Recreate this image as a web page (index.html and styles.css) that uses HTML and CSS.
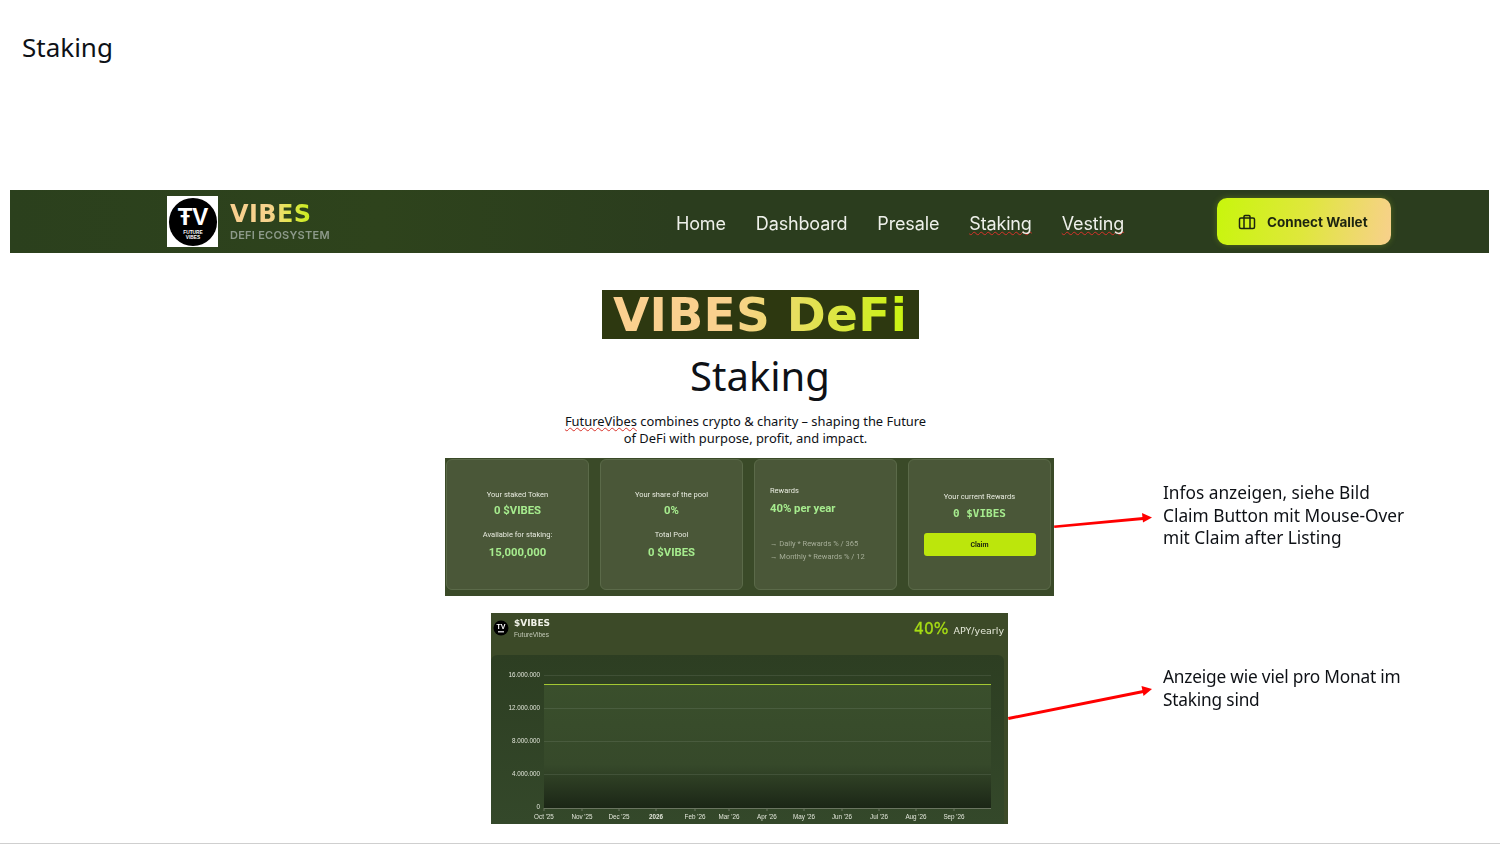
FILE: index.html
```html
<!DOCTYPE html>
<html lang="de">
<head>
  <meta charset="UTF-8">
  <title>Staking</title>
  <link rel="stylesheet" href="styles.css">
</head>
<body>
  <div class="slide">
    <div class="slide-title">Staking</div>

    <div class="navbar">
      <div class="brand">
        <div class="logo-box">
          <svg width="52" height="52" viewBox="0 0 52 52">
            <circle cx="26" cy="26" r="25" fill="#000"/>
            <text x="26" y="29" text-anchor="middle" class="logo-big">ŦV</text>
            <text x="26" y="38" text-anchor="middle" class="logo-small">FUTURE</text>
            <text x="26" y="44" text-anchor="middle" class="logo-small">VIBES</text>
          </svg>
        </div>
        <div class="brand-text">
          <div class="brand-name">VIBES</div>
          <div class="brand-sub">DEFI ECOSYSTEM</div>
        </div>
      </div>
      <div class="nav-links">
        <span>Home</span>
        <span>Dashboard</span>
        <span>Presale</span>
        <span class="spell">Staking</span>
        <span class="spell">Vesting</span>
      </div>
      <div class="wallet-btn">
        <svg width="18" height="18" viewBox="0 0 18 18" fill="none" stroke="#1c2410" stroke-width="1.5">
          <rect x="1.5" y="5" width="15" height="10.5" rx="1.5"/>
          <path d="M6 15.500V3.500a1 1 0 0 1 1-1h4a1 1 0 0 1 1 1v12"/>
        </svg>
        <span>Connect Wallet</span>
      </div>
    </div>

    <div class="hero">
      <div class="hero-banner"><span>VIBES DeFi</span></div>
      <div class="hero-title">Staking</div>
      <div class="hero-text"><span class="spell">FutureVibes</span> combines crypto &amp; charity – shaping the Future<br>of DeFi with purpose, profit, and impact.</div>
    </div>

    <div class="stats">
      <div class="card">
        <div class="label">Your staked Token</div>
        <div class="value">0 $VIBES</div>
        <div class="label gap">Available for staking:</div>
        <div class="value wide">15,000,000</div>
      </div>
      <div class="card">
        <div class="label">Your share of the pool</div>
        <div class="value">0%</div>
        <div class="label gap">Total Pool</div>
        <div class="value wide">0 $VIBES</div>
      </div>
      <div class="card card-left">
        <div class="label">Rewards</div>
        <div class="value wide">40% per year</div>
        <div class="formula first">→ Daily * Rewards % / 365</div>
        <div class="formula">→ Monthly * Rewards % / 12</div>
      </div>
      <div class="card">
        <div class="label">Your current Rewards</div>
        <div class="value mono">0 $VIBES</div>
        <div class="claim">Claim</div>
      </div>
    </div>

    <div class="chart">
      <div class="chart-head">
        <div class="token">
          <svg width="16" height="16" viewBox="0 0 16 16">
            <circle cx="8" cy="8" r="7.500" fill="#000"/>
            <text x="8" y="9" text-anchor="middle" class="token-mark">TV</text>
            <rect x="5" y="11" width="6" height="1.500" fill="#bbb"/>
          </svg>
          <div>
            <div class="token-name">$VIBES</div>
            <div class="token-sub">FutureVibes</div>
          </div>
        </div>
        <div class="apy"><b>40%</b> APY/yearly</div>
      </div>
      <div class="chart-panel">
        <svg width="513" height="169" viewBox="0 0 513 169">
          <defs>
            <linearGradient id="area" x1="0" y1="0" x2="0" y2="1">
              <stop offset="0" stop-color="#3a4f2c"/>
              <stop offset="0.65" stop-color="#36492a"/>
              <stop offset="1" stop-color="#1b2616"/>
            </linearGradient>
          </defs>
          <rect x="53" y="29" width="447" height="124" fill="url(#area)"/>
          <path d="M53 20.500H500M53 53.500H500M53 86.500H500M53 119.500H500" stroke="#fff" stroke-opacity="0.09"/>
          <path d="M53 29.500H500" stroke="#a4c832"/>
          <path d="M53 153.500H500" stroke="#6a7560"/>
          <path d="M53 153V156M91 153V156M128 153V156M165 153V156M204 153V156M238 153V156M276 153V156M313 153V156M351 153V156M388 153V156M425 153V156M463 153V156" stroke="#6a7560"/>
          <g class="axis-y" text-anchor="end">
            <text x="49" y="22">16.000.000</text>
            <text x="49" y="55">12.000.000</text>
            <text x="49" y="88">8.000.000</text>
            <text x="49" y="121">4.000.000</text>
            <text x="49" y="154">0</text>
          </g>
          <g class="axis-x" text-anchor="middle">
            <text x="53" y="164">Oct '25</text>
            <text x="91" y="164">Nov '25</text>
            <text x="128" y="164">Dec '25</text>
            <text x="165" y="164" font-weight="700">2026</text>
            <text x="204" y="164">Feb '26</text>
            <text x="238" y="164">Mar '26</text>
            <text x="276" y="164">Apr '26</text>
            <text x="313" y="164">May '26</text>
            <text x="351" y="164">Jun '26</text>
            <text x="388" y="164">Jul '26</text>
            <text x="425" y="164">Aug '26</text>
            <text x="463" y="164">Sep '26</text>
          </g>
        </svg>
      </div>
    </div>

    <svg class="arrows" width="1500" height="846" viewBox="0 0 1500 846">
      <g fill="#ff0000" stroke="none">
        <polygon points="1054,525.500 1143,517 1143.300,520 1054.300,528"/>
        <polygon points="1152,517.500 1142,513 1143,522.500"/>
        <polygon points="1008,717 1143,690 1143.600,693 1008.600,720"/>
        <polygon points="1152,689 1141.500,686 1143.500,696"/>
      </g>
    </svg>

    <div class="note note-one">Infos anzeigen, siehe Bild<br>Claim Button mit Mouse-Over<br>mit Claim after Listing</div>
    <div class="note note-two">Anzeige wie viel pro Monat im<br>Staking sind</div>

    <div class="slide-end"></div>
  </div>
</body>
</html>
```

FILE: styles.css
```css
html, body {
  margin: 0;
  padding: 0;
  background: #fff;
  overflow: hidden;
}

.slide {
  position: relative;
  width: 1500px;
  height: 846px;
  font-family: "Noto Sans", sans-serif;
  color: #0e1116;
  overflow: hidden;
}

.slide-title {
  position: absolute;
  left: 22px;
  top: 29px;
  font-size: 26px;
  line-height: 36px;
}

.spell {
  text-decoration: underline wavy #d8322a 1px;
  text-decoration-skip-ink: none;
  text-underline-offset: 1px;
}

/* navbar picture */
.navbar {
  position: absolute;
  left: 10px;
  top: 190px;
  width: 1479px;
  height: 63px;
  background: linear-gradient(90deg, #2b401d 0%, #2e431c 25%, #2b3d1e 45%, #2b3d1e 100%);
  display: flex;
  align-items: center;
  font-family: Inter, sans-serif;
  filter: blur(0.3px);
}

.brand {
  display: flex;
  align-items: center;
  gap: 12px;
  margin-left: 157px;
  width: 509px;
}

.logo-box {
  width: 51px;
  height: 51px;
  background: #fff;
  display: flex;
  align-items: center;
  justify-content: center;
}

.logo-box svg {
  width: 50px;
  height: 50px;
}

.logo-big {
  font: 700 25px "Liberation Sans", sans-serif;
  fill: #fff;
}

.logo-small {
  font: 700 5px "Liberation Sans", sans-serif;
  fill: #fff;
}

.brand-name {
  display: inline-block;
  font-family: "DejaVu Sans", sans-serif;
  font-size: 24px;
  font-weight: 700;
  line-height: 26px;
  letter-spacing: 0.4px;
  background: linear-gradient(90deg, #f9d08f 0%, #f6d28c 50%, #e4e650 72%, #c8ec1c 100%);
  -webkit-background-clip: text;
  background-clip: text;
  color: transparent;
}

.brand-sub {
  font-size: 11px;
  font-weight: 600;
  line-height: 14px;
  letter-spacing: 0.25px;
  color: #8d9a8a;
  margin-top: 1px;
}

.nav-links {
  display: flex;
  gap: 30px;
  font-size: 18px;
  color: #eef0ea;
  width: 541px;
  letter-spacing: -0.15px;
  padding-top: 3px;
}

.wallet-btn {
  display: flex;
  align-items: center;
  gap: 11px;
  width: 174px;
  height: 47px;
  box-sizing: border-box;
  padding-left: 21px;
  border-radius: 10px;
  background: linear-gradient(100deg, #c8f60c 0%, #dfe73c 50%, #f8d08c 100%);
  box-shadow: 0 0 6px rgba(200, 240, 30, 0.25);
  color: #1c2410;
  font-size: 13.500px;
  font-weight: 700;
}

/* heading block */
.hero {
  position: absolute;
  left: 445px;
  top: 290px;
  width: 630px;
  display: flex;
  flex-direction: column;
  align-items: center;
}

.hero-banner {
  width: 317px;
  height: 49px;
  background: #2d3810;
  display: flex;
  align-items: center;
  justify-content: center;
}

.hero-banner span {
  font-family: "DejaVu Sans", sans-serif;
  font-size: 47px;
  font-weight: 700;
  line-height: 49px;
  letter-spacing: 0.3px;
  white-space: nowrap;
  background: linear-gradient(90deg, #fbd08f 0%, #f9d18e 40%, #c8f40f 100%);
  -webkit-background-clip: text;
  background-clip: text;
  color: transparent;
}

.hero-title {
  font-size: 40px;
  line-height: 56px;
  margin-top: 9px;
}

.hero-text {
  font-size: 12.900px;
  line-height: 17px;
  text-align: center;
  margin-top: 9px;
  margin-right: 29px;
}

/* stat cards picture */
.stats {
  position: absolute;
  left: 445px;
  top: 458px;
  width: 609px;
  height: 138px;
  box-sizing: border-box;
  padding: 1px 3px 6px 1px;
  background: #3a4a28;
  display: grid;
  grid-template-columns: repeat(4, 143px);
  column-gap: 11px;
  font-family: Roboto, sans-serif;
  filter: blur(0.3px);
}

.card {
  box-sizing: border-box;
  background: #4a5738;
  border: 1px solid #5b6a49;
  border-radius: 6px;
  display: flex;
  flex-direction: column;
  align-items: center;
  padding-top: 30px;
}

.card-left {
  align-items: flex-start;
  padding: 26px 0 0 15px;
}

.label {
  font-size: 7.500px;
  line-height: 10px;
  color: #e8ebdf;
}

.label.gap {
  margin-top: 12px;
}

.value {
  font-size: 11.300px;
  font-weight: 700;
  line-height: 14px;
  color: #a6ec8e;
  margin-top: 4px;
}

.value.wide {
  margin-top: 6px;
}

.value.mono {
  font-family: "DejaVu Sans Mono", monospace;
  font-size: 11px;
  margin-top: 5px;
}

.formula {
  font-size: 7.500px;
  line-height: 13px;
  color: #a5ad97;
}

.formula.first {
  margin-top: 21px;
}

.claim {
  width: 112px;
  height: 23px;
  margin-top: 12px;
  border-radius: 3px;
  background: #bce60c;
  color: #1c2410;
  font-size: 7px;
  font-weight: 700;
  display: flex;
  align-items: center;
  justify-content: center;
}

.card:last-child {
  padding-top: 32px;
}

/* chart picture */
.chart {
  position: absolute;
  left: 491px;
  top: 613px;
  width: 517px;
  height: 211px;
  background: #3c4a28;
  display: flex;
  flex-direction: column;
  font-family: "Liberation Sans", sans-serif;
  filter: blur(0.3px);
}

.chart-head {
  height: 42px;
  display: flex;
  justify-content: space-between;
  padding: 4px 4px 0 2px;
  box-sizing: border-box;
}

.token {
  display: flex;
  gap: 5px;
  align-items: flex-start;
}

.token svg {
  margin-top: 3px;
}

.token-mark {
  font: 700 7px "Liberation Sans", sans-serif;
  fill: #fff;
}

.token-name {
  font-family: "DejaVu Sans", sans-serif;
  font-size: 9px;
  font-weight: 700;
  line-height: 12px;
  color: #f0f2e8;
}

.token-sub {
  font-size: 6.500px;
  line-height: 10px;
  margin-top: 1px;
  color: #c4cab8;
}

.apy {
  font-family: "DejaVu Sans", sans-serif;
  font-size: 9.500px;
  color: #e4e8d8;
  line-height: 24px;
}

.apy b {
  font-size: 15.500px;
  font-weight: 400;
  color: #a6dc14;
  -webkit-text-stroke: 0.3px #a6dc14;
  margin-right: 2px;
}

.chart-panel {
  width: 513px;
  height: 169px;
  background: linear-gradient(180deg, #2d3e22, #34482a);
  border-radius: 6px 6px 0 0;
}

.chart-panel svg {
  display: block;
}

.axis-y text,
.axis-x text {
  font-size: 6.300px;
  fill: #e2e6da;
}

.arrows {
  position: absolute;
  left: 0;
  top: 0;
  pointer-events: none;
}

.note {
  position: absolute;
  left: 1163px;
  font-size: 17.300px;
  line-height: 22.500px;
}

.note-one {
  top: 482px;
}

.note-two {
  top: 666px;
  letter-spacing: -0.2px;
}

.slide-end {
  position: absolute;
  left: 0;
  right: 0;
  top: 843px;
  height: 1px;
  background: #cfcfcf;
}
```
